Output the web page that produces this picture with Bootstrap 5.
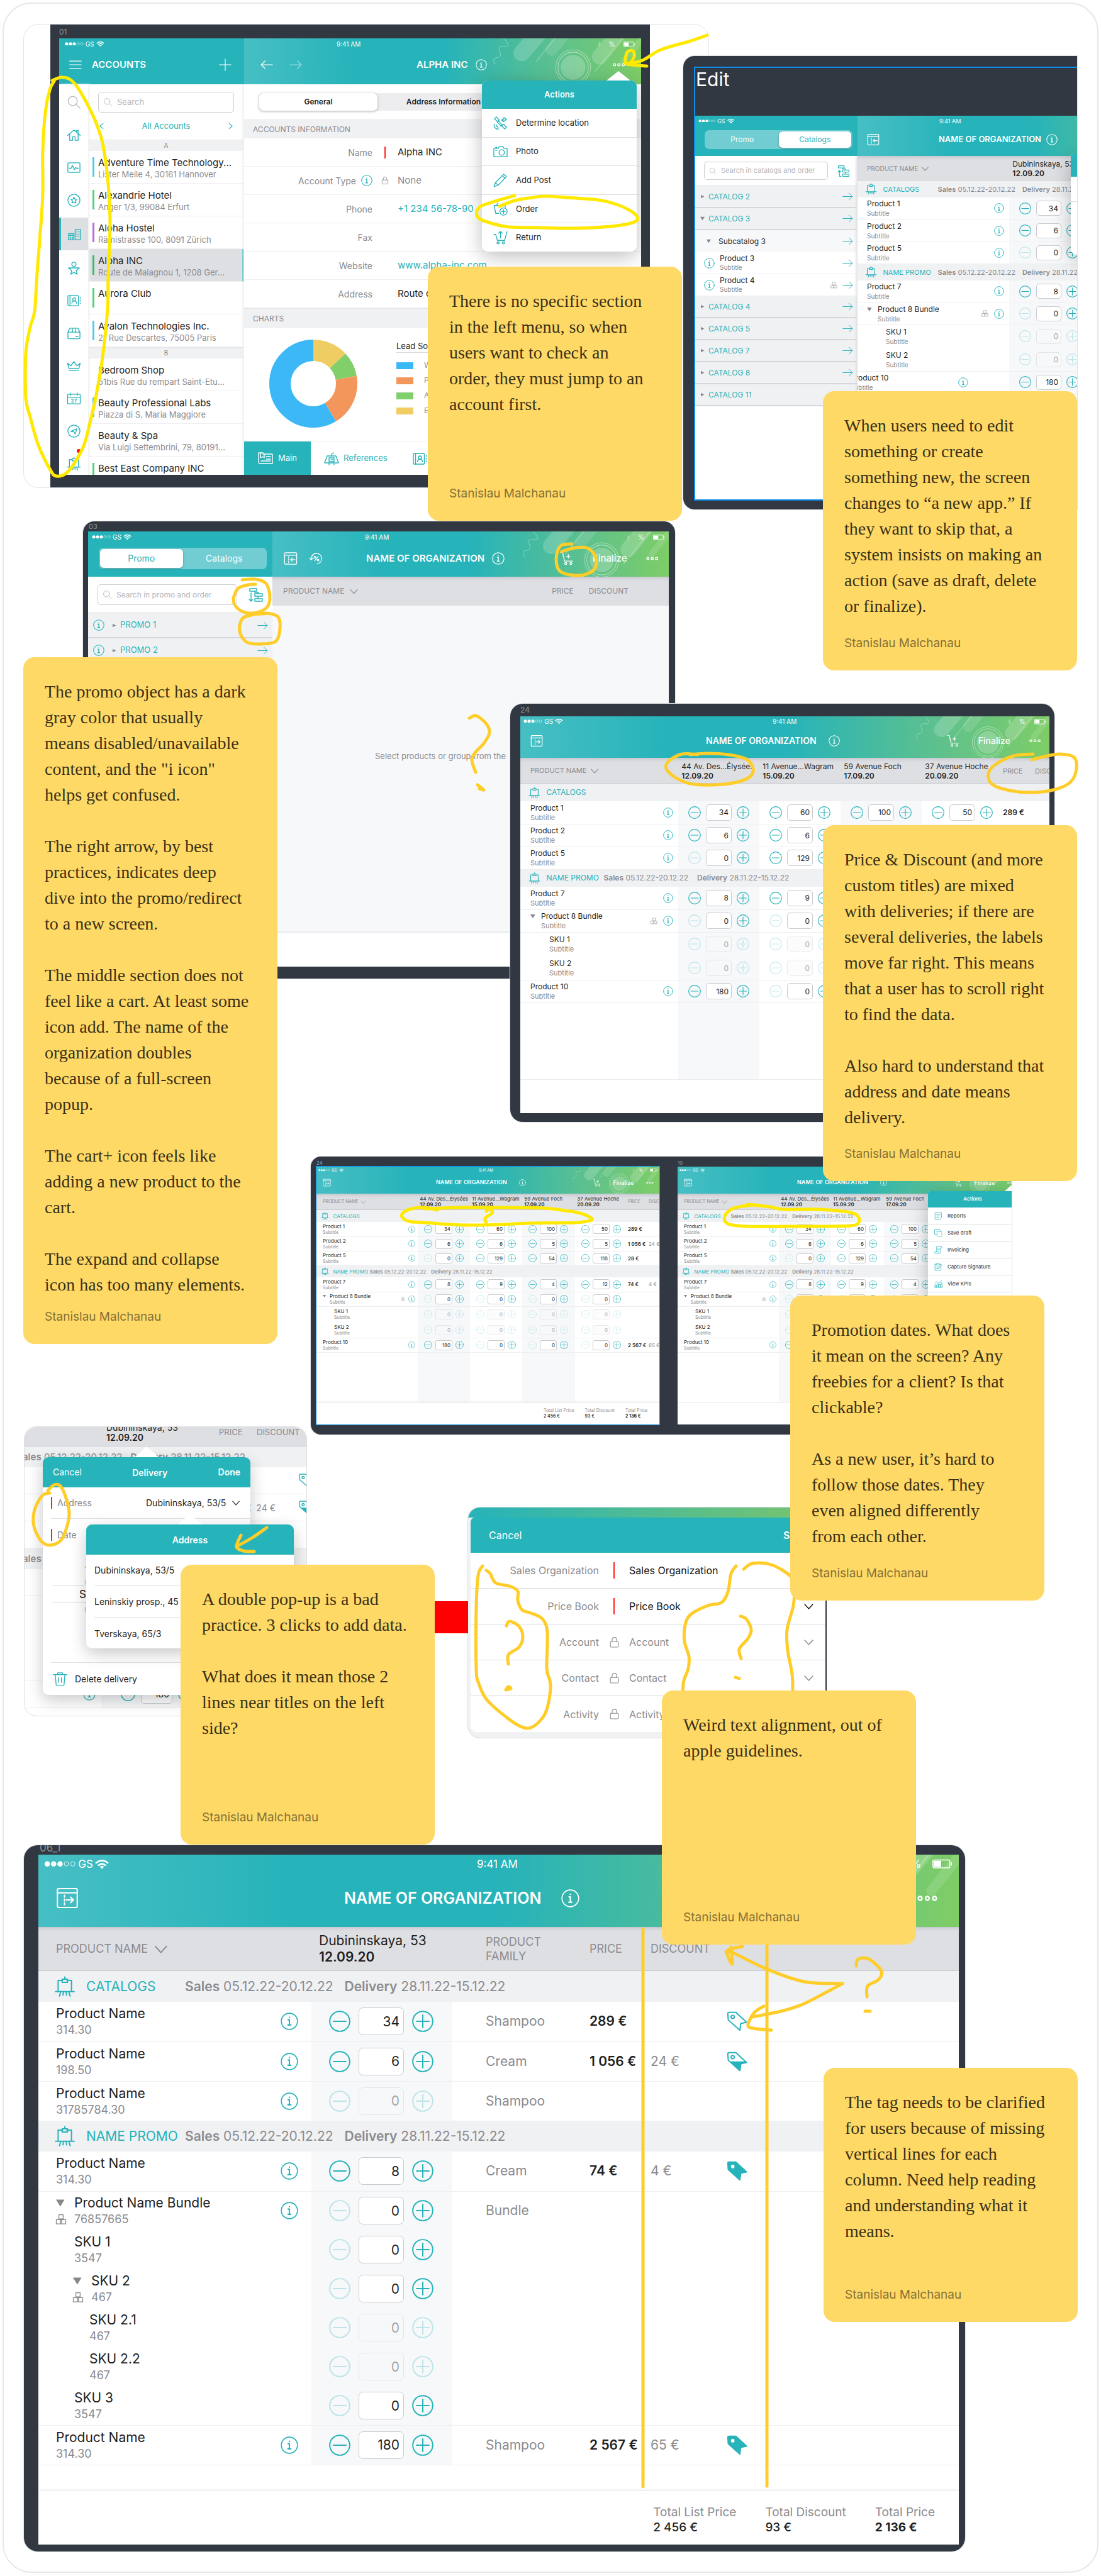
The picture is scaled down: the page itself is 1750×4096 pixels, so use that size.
<!DOCTYPE html>
<html lang="en">
<head>
<meta charset="utf-8">
<meta name="viewport" content="width=device-width, initial-scale=1">
<title>Order flow review board</title>
<link href="https://cdn.jsdelivr.net/npm/bootstrap@5.3.0/dist/css/bootstrap.min.css" rel="stylesheet">
<style>
:root{--teal:#26b3ba;--grey:#8b8b8f;--ink:#1f1f22;--note:#ffd966;--dark:#313841}
body{background:#fff;font-family:Inter,"Liberation Sans",sans-serif;color:var(--ink);margin:0}
.canvas{position:relative;min-height:4096px;overflow:hidden}
.canvas-edge{position:absolute;inset:4px 4px 5px 4px;border:2px solid #e8e8e8;border-radius:46px}
.ic{display:block;flex:none;width:var(--ic,20px);height:var(--ic,20px);fill:none;stroke:currentColor;stroke-width:1.4;stroke-linecap:round;stroke-linejoin:round}
.bare{background:none;border:0;padding:0;color:inherit;font:inherit;line-height:1;display:inline-flex;align-items:center;justify-content:center;text-decoration:none}
.txt-teal{color:var(--teal)}.txt-grey{color:var(--grey)}
a.txt-teal{text-decoration:none}

/* sticky notes */
.sticky{position:absolute;width:404px;min-height:404px;background:var(--note);border-radius:18px;padding:34px 24px 32px 34px;display:flex;flex-direction:column;font-family:"Liberation Serif",serif;font-size:28px;line-height:41px;color:#3a3117;white-space:nowrap}
.sticky p{margin:0 0 41px}
.sticky p:last-of-type{margin-bottom:20px}
.sticky footer{margin-top:auto;font-family:Inter,"Liberation Sans",sans-serif;font-size:19px;line-height:22px;color:#857136}
#n1{left:680px;top:424px}#n2{left:1308px;top:622px;min-height:444px}#n3{left:37px;top:1045px}#n4{left:1308px;top:1312px;min-height:566px}
#n5{left:1256px;top:2060px;min-height:485px}#n6{left:287px;top:2488px;min-height:445px}#n7{left:1052px;top:2688px}#n8{left:1309px;top:3288px}
#link-bar{position:absolute;left:690px;top:2546px;width:54px;height:51px;background:#f00}

/* device frames */
.device{position:absolute;background:var(--dark);overflow:hidden;display:flex;flex-direction:column;box-shadow:0 0 0 1px #e2e2e4}
.device-cap{flex:none;color:#8f9499;line-height:1}
.screen{background:#fff;overflow:hidden;position:relative}
#d1{left:37px;top:38px;width:1090px;height:738px;background:#fff;border:1px solid #e4e4e6;border-radius:24px;box-shadow:none}
#d1 .bezel{margin-left:42px;width:953px;background:var(--dark);padding:0 14px 20px;flex:1;display:flex;flex-direction:column;min-height:0}
#d1 .device-cap{height:22px;padding-top:6px;font-size:12px}
#d2{left:1086px;top:89px;width:626px;height:721px;border-radius:18px 0 0 18px;padding:17px 0 14px 17px}
#d2 .sel{border:2px solid #0d8ce9;border-right:0;flex:1;display:flex;flex-direction:column;min-height:0}
#d2 .device-cap{height:76px;font-size:30px;color:#fff;padding:3px 0 0 1px}
#d3{left:132px;top:829px;width:941px;height:727px;border-radius:18px;padding:0 10px 19px 8px}
#d3 .device-cap{height:16px;padding:3px 0 0 1px;font-size:11px}
#d4{left:811px;top:1119px;width:865px;height:665px;border-radius:20px;padding:0 8px 14px 16px}
#d4 .device-cap{height:20px;padding:4px 0 0;font-size:12px}
#d5{left:494px;top:1839px;width:1114px;height:442px;border-radius:16px 0 0 16px;padding:0 0 16px 9px;flex-direction:row;gap:29px}
#d5 .device-cap{height:16px;padding-top:6px;font-size:8px}
#d9{left:38px;top:2934px;width:1496px;height:1123px;border-radius:22px;padding:0 10px 11px 23px}
#d9 .device-cap{height:15px;font-size:17px;padding-left:2px;line-height:9px}

/* app chrome */
.app{--pad:16px;--fs:12px;--fs2:11px;--lh:16px;--lh2:14px;--hdr:66px;--st:401px;--sth:16px;--stf:10px;--tl:295px;--tf:14px;--head:41px;--hf:11px;--band:28px;--bf:12px;--bg:14px;--bl:91px;--bi:19px;--row:36px;--sku:38px;--info:16px;--ir:8px;--qp:16px;--btn:20px;--qg:8px;--inw:41px;--inh:26px;--ag:30px;--ar:14px;--hi:20px;--rad:5px}
.app-s{--pad:10px;--fs:8px;--fs2:7px;--lh:10px;--lh2:9px;--hdr:43px;--st:258px;--sth:11px;--stf:6px;--tl:190px;--tf:9px;--head:26px;--hf:7px;--band:19px;--bf:8px;--bg:8px;--bl:58px;--bi:13px;--row:23px;--sku:25px;--info:11px;--ir:4px;--qp:10px;--btn:13px;--qg:5px;--inw:27px;--inh:16px;--ag:20px;--ar:9px;--hi:13px;--rad:3px}
.app-l{--pad:28px;--fs:21px;--fs2:18px;--lh:28px;--lh2:24px;--hdr:115px;--st:697px;--sth:30px;--stf:17px;--tl:486px;--tf:25px;--head:70px;--hf:18px;--band:49px;--bf:21px;--bg:18px;--bl:157px;--bi:34px;--row:63px;--sku:62px;--info:28px;--ir:21px;--qp:28px;--btn:34px;--qg:13px;--inw:72px;--inh:44px;--ag:40px;--ar:34px;--hi:36px;--rad:7px}
.app-e{--pad:15px;--fs2:10px;--hdr:64px;--st:130px;--tl:129px;--tf:13px;--head:39px;--hf:10px;--band:27px;--bf:11px;--bg:11px;--bl:87px;--row:35px;--sku:37px;--btn:19px;--inw:40px;--inh:24px;--stf:9px}
.app-p{--hdr:72px;--st:147px;--sth:18px;--tl:149px;--tf:15px;--head:46px;--hf:12px;--hi:22px;--pad:18px;--ar:17px}
.app-a{--hdr:73px;--st:147px;--sth:18px;--tl:274px;--tf:15px;--hi:20px;--pad:26px;--ar:26px}
.bar{position:relative;flex:none;height:var(--hdr);color:#fff;display:flex;flex-direction:column;overflow:hidden;background:linear-gradient(90deg,#46bfc4 0,var(--teal) 28%,var(--teal) 50%,#5cc08f 78%,#7ecd66 100%)}
.bar.flat{background:var(--teal)}
.bar .deco{position:absolute;right:0;top:0;height:100%;width:auto;aspect-ratio:4/1}
.status{height:var(--sth);font-size:var(--stf);line-height:1;position:relative;flex:none;white-space:nowrap}
.st-left{width:var(--st);flex:none;padding-left:calc(var(--pad)/3);gap:3px}
.st-left .dots{height:.55em;width:3em}
.st-left .wifi{height:1em;width:1.3em}
.status .batt{width:1.9em;height:.9em}
.status .end{gap:.6em;padding-right:calc(var(--pad)/3)}
.tools{position:relative;flex:1;display:flex;align-items:center;padding-bottom:calc(var(--pad)/4)}
.tools .start{width:var(--tl);flex:none;padding-left:var(--pad);--ic:var(--hi);gap:18px}
.tools h2{font-size:var(--tf);font-weight:600;line-height:1.2;margin:0;white-space:nowrap}
.tools .i-circle{--ic:calc(var(--hi) - 2px);margin-left:var(--qg)}
.app-l .tools .i-circle{margin-left:32px;--ic:29px}
.app:not(.app-l):not(.app-e) .tools .i-circle{margin-left:1.2em}
.app-p .tools .i-circle,.app-a .tools .i-circle{margin-left:12px!important}
.tools .end{gap:var(--ag);padding-right:var(--ar);font-size:var(--tf);font-weight:500;--ic:var(--hi)}
.app-l .tools .end{font-size:23px}
.tools .more{width:1.3em;height:.4em;stroke:none;fill:none}
.app-l .tools .more{width:32px;height:9px}

/* order table */
.order{width:100%;table-layout:fixed;border-collapse:collapse;font-size:var(--fs);line-height:var(--lh)}
.order th,.order td{padding:0;font-weight:400;vertical-align:middle;white-space:nowrap}
.order thead tr{height:var(--head);background:#dedfe3;box-shadow:inset 0 5px 6px -4px #b8b8c2,inset 0 -1px 0 #c9cacf}
.order thead th{color:var(--grey);font-size:var(--hf)}
.order thead .dlv{color:var(--ink);font-size:var(--fs);line-height:calc(var(--lh) - 1px);padding-left:calc(var(--qp)/3)}
.app-l .order thead .dlv{padding-left:12px;line-height:26px}
.order thead .first{padding-left:var(--pad)}
.order thead .first .ic{display:inline-block;vertical-align:middle;width:1.3em;height:1.3em;margin-left:.5em}
.order .bandrow{height:var(--band);background:#f0f1f3;font-size:var(--bf);color:var(--grey)}
.bandline{display:flex;align-items:center;padding-left:calc(var(--pad) - 3px)}
.bandline .ic{--ic:var(--bi);margin-right:calc(var(--bi)/2);color:var(--teal)}
.bandline .lbl{width:var(--bl);color:var(--teal)}
.bandline .span-dates{display:flex;gap:var(--bg)}
.bandline b{font-weight:600}
.order .r{height:var(--row);border-bottom:1px solid #efeff1}
.order .sku{height:var(--sku);border-bottom-color:transparent}
.order .sku.last{border-bottom-color:#efeff1}
.order td.shade{background:#f7f8fa}
.nm{display:flex;align-items:center;padding-left:var(--pad)}
.nm .sub{font-size:var(--fs2);line-height:var(--lh2);color:var(--grey)}
.nm .lead-col{width:var(--lh);margin-right:1px;flex:none;color:#88888c}
.nm .tri{width:.65em;height:var(--lh);display:block}
.nm .lead-col .ic{--ic:18px;margin:3px 0 3px -1px;stroke-width:1.7}
.nm .bundle{--ic:calc(var(--fs) - 1px);color:#88888c;margin-right:calc(var(--ir) + 1px)}
.nm .i-circle{--ic:var(--info);margin-right:var(--ir);color:var(--teal)}
.nm .ind1{padding-left:calc(var(--lh) + 1px)}.nm .ind2{padding-left:calc(var(--lh)*2 - 2px)}
.app-l .nm .ind2{padding-left:53px}
.app-l .nm .ind1 + .lead-col{margin-left:-2px}
.shifted .nm{margin-left:-26px}.shifted .nm .i-circle{margin-right:65px}
.qty{display:flex;align-items:center;gap:var(--qg);padding-left:var(--qp);color:var(--teal);--ic:var(--btn)}
.qty input{width:var(--inw);height:var(--inh);border:1px solid #cbcbcf;border-radius:var(--rad);background:#fff;text-align:right;font-size:var(--fs);color:var(--ink);padding:0 calc(var(--rad) - 1px) 0 0;line-height:1;font-family:inherit}
.qty .off{opacity:.28}.qty input:disabled{opacity:.4;background:#f9faf9}
.order .fam{color:var(--grey);padding-left:53px}
.order td.disc{color:var(--grey)}
.order td.price{font-weight:600}
.order .tagcell{--ic:34px;color:var(--teal)}
.totals{display:flex;justify-content:flex-end;border-top:1px solid #ececee;box-shadow:0 -3px 4px -2px #eee;color:var(--grey);line-height:1.25}
.totals b{display:block;color:var(--ink);font-weight:500}
.totals div:last-child b{font-weight:700}

/* side lists */
.seg{display:flex;background:rgba(255,255,255,.35);border-radius:7px;padding:2px;font-size:14px}
.seg .bare{flex:1;border-radius:6px;color:#fff}
.seg .on{background:#fff;color:var(--teal);box-shadow:0 1px 3px rgba(0,0,0,.3)}
.find{border:1px solid #cfcfd4;border-radius:5px;display:flex;align-items:center;gap:7px;padding:0 7px;color:#b4b4b9;background:#fff;--ic:15px}
.find input{border:0;outline:0;width:100%;padding:0;background:none;color:var(--ink);font-size:inherit}
.find input::placeholder{color:#b4b4b9;opacity:1}
.tree-row{display:flex;align-items:center;height:35px;border-bottom:2px solid #d6d7da;background:#f0f1f3;color:var(--teal);font-size:12px;padding:0 7px 0 8px}
.tree-row .tri{width:7px;height:7px;margin-right:6px;color:#88888c}
.tree-row .go{--ic:17px;margin-left:auto}
.tree-row.leaf{background:#fff;border-bottom:1px solid #efeff1;color:var(--ink);padding-left:14px;line-height:14px}
.tree-row.subcat{background:#f7f8fa;border-bottom:0;color:var(--ink);padding-left:18px}
.tree-row.subcat .tri{margin-right:12px}

/* accounts screen */
.rail{width:46px;flex:none;height:629px;padding-top:3px;display:flex;flex-direction:column;color:var(--teal);--ic:23px;box-shadow:2px 0 3px #f1f1f3;position:relative}
.rail .bare{flex:1}
.rail .bare:first-child{color:#bcbcc0}
.rail .on{background:#dedfe3;border-left:3px solid var(--teal);margin:2px 0}
.rail i{position:absolute;width:6px;height:6px;border-radius:50%;background:#f11;right:12px;bottom:43px}
.alpha{height:18px;background:#f0f1f3;border-top:1px solid #e4e5e8;color:var(--grey);font-size:10px;line-height:17px;text-align:center}
.acc{display:flex;height:52px;border-bottom:1px solid #efeff1;padding:10px 0 0 7px;line-height:17px;font-size:15px;white-space:nowrap}
.acc:before{content:"";width:3px;height:31px;margin-right:6px;background:var(--c,transparent)}
.acc .sub{font-size:13px;line-height:20px;color:var(--grey)}
.acc.on{background:#dedfe3;border-right:3px solid var(--teal)}
.ttl-band{background:#f0f1f3;border-top:1px solid #e4e5e8;color:var(--grey);font-size:12px;display:flex;align-items:center;padding-left:14px}
.fld{display:flex;align-items:center;height:45px;border-bottom:1px solid #efeff1;font-size:15px}
.fld .k{width:204px;text-align:right;color:var(--grey);font-size:14px;display:flex;justify-content:flex-end;align-items:center}
.fld .m{width:40px;display:flex;justify-content:center;color:var(--grey);--ic:14px}
.req{width:2px;height:19px;background:#f22}
.menu-pop{position:absolute;background:#fff;display:flex;flex-direction:column;box-shadow:0 8px 30px rgba(0,0,0,.25);border-radius:9px}
.menu-pop h3{margin:0;background:var(--teal);color:#fff;border-radius:9px 9px 0 0;font-weight:600;text-align:center;display:flex;align-items:center;justify-content:center}
.menu-pop .bare{justify-content:flex-start;border-bottom:1px solid #dcdde0}
.menu-pop .bare .ic{color:var(--teal)}
.menu-pop .bare:last-child{border:0}
.menu-pop:before{content:"";position:absolute;bottom:100%;left:var(--cx);border:solid transparent;border-width:0 var(--cw) var(--chh);border-bottom-color:#fff}
#acts1{left:672px;top:67px;width:246px;height:272px;--cx:198px;--cw:19px;--chh:15px;font-size:13px}
#acts1 h3{height:45px;font-size:13px}
#acts1 .bare{flex:1;padding-left:18px;gap:13px;--ic:23px}
#acts6{left:398px;top:39px;width:146px;height:190px;--cx:122px;--cw:11px;--chh:10px;font-size:8px;border-radius:4px}
#acts6 h3{height:26px;font-size:8px;border-radius:4px 4px 0 0;padding-right:4px}
#acts6 .bare{height:27px;padding-left:10px;gap:8px;--ic:13px}
#acts2{left:597px;top:61px;width:200px;height:160px;font-size:12px;--cx:150px;--cw:10px;--chh:8px;border-radius:4px 0 0 9px}
#acts2 h3{height:36px;border-radius:4px 0 0 0}#acts2 .bare{height:40px}
.legend-row{display:flex;align-items:center;height:24px;color:var(--grey);font-size:12px}
.legend-row:before{content:"";width:27px;height:11px;background:var(--c);margin-right:17px}
.tabs1{height:54px;display:flex;border-top:1px solid #efeff1;color:var(--teal);font-size:13px;--ic:24px}
.tabs1 .bare{padding:0 18px 0 21px;gap:7px}
.tabs1 .on{background:var(--teal);color:#fff;width:106px;padding:0;gap:8px}

/* delivery popover capture */
#d7{position:absolute;left:38px;top:2268px;width:450px;height:461px;border:1px solid #dedee0;border-radius:20px;overflow:hidden;font-size:14px;background:#fff}
#d7 .bg-head{height:31px;background:#dedfe3;border-bottom:1px solid #c6c7cc;display:flex;align-items:flex-end;color:var(--grey);line-height:16px;padding-bottom:5px;font-size:14px}
#d7 .bg-addr{width:309px;padding-left:130px;color:var(--ink)}
#d7 .bg-band{height:33px;background:#f0f1f3;color:var(--grey);line-height:33px;white-space:nowrap;font-size:15px;text-indent:-3px}
#d7 .bg-row{height:43px;border-bottom:1px solid #efeff1;display:flex;align-items:center;justify-content:flex-end;color:var(--grey);--ic:25px}
#d7 .pop{position:absolute;background:#fff;border-radius:9px;width:330px;box-shadow:0 8px 26px rgba(0,0,0,.22)}
#d7 .pop:before{content:"";position:absolute;left:146px;bottom:100%;border:solid transparent;border-width:0 19px 17px;border-bottom-color:#fff}
#d7 .pop header{height:48px;background:var(--teal);color:#fff;border-radius:9px 9px 0 0;display:flex;align-items:center;justify-content:space-between;padding:0 16px}
#d7 .p1{left:29px;top:48px;height:378px;display:flex;flex-direction:column}
#d7 .p2{left:98px;top:155px;height:197px}
#d7 .line{display:flex;align-items:center;height:50px;margin-left:13px;border-bottom:1px solid #e2e2e4}
#d7 .faint{color:#c4c4c8;margin-left:66px}
.drop{appearance:none;border:0;background:none;color:inherit;font:inherit;padding:0;margin:0;outline:0}
/* sales organisation form capture */
#d8{position:absolute;left:743px;top:2396px;width:571px;height:368px;border:1px solid #dedee0;border-right:2px solid var(--dark);border-radius:20px 0 0 20px;overflow:hidden;font-size:16px;background:#f0f1f3}
#d8 .strip{height:16px;background:linear-gradient(90deg,#26b3ba,#7ac56c)}
#d8 form{margin-left:4px;background:#fff;border-radius:7px 0 0 9px;overflow:hidden}
#d8 header{height:56px;background:var(--teal);color:#fff;display:flex;align-items:center;padding:0 29px;justify-content:space-between}
#d8 .frow{display:flex;align-items:center;height:57px;border-bottom:1px solid #d9dadd;color:var(--grey);padding-right:18px}
#d8 .frow:last-child{border:0}
#d8 .frow label{width:204px;text-align:right;color:var(--grey)}
#d8 .frow .m{width:48px;display:flex;justify-content:center;--ic:19px}
#d8 .frow.must .drop,#d8 .frow.must > .ic{color:#111}
#d8 .frow .drop{flex:1}
#d8 .frow > .ic{--ic:17px}
#d8 .req{height:26px}
.ink{position:absolute;left:0;top:0;pointer-events:none;fill:none;stroke-linecap:round;stroke-linejoin:round}
</style>
</head>
<body>
<svg width="0" height="0" class="position-absolute" aria-hidden="true"><defs>
<symbol id="search" viewBox="0 0 24 24"><circle cx="10" cy="10" r="7.5"/><path d="M15.5 15.5 22 22"/></symbol>
<symbol id="home" viewBox="0 0 24 24"><path d="M1.5 13 12 4l10.500 9M5 10.500V21h5v-6h4v6h5V10.500M16 7V4.500h3V10"/></symbol>
<symbol id="pulse" viewBox="0 0 24 24"><rect x="2" y="4" width="20" height="16" rx="1.500"/><path d="M4.500 13h3l2-4.500 3.500 7 2-4 1 1.500h3.500"/></symbol>
<symbol id="starc" viewBox="0 0 24 24"><circle cx="12" cy="12" r="10"/><path d="m12 6.800 1.500 3.300 3.600.4-2.700 2.400.8 3.600-3.200-1.800-3.200 1.800.8-3.600-2.700-2.400 3.600-.4z"/></symbol>
<symbol id="city" viewBox="0 0 24 24"><path d="M2 11h9v10H2zM2 14h9M13 4h9v17h-9zM4.500 17h1M8 17h1M4.500 19.300h1M8 19.300h1M15.500 7h1M18.800 7h1M15.500 10h1M18.800 10h1M15.500 13h1M18.800 13h1M15.500 16h1M18.800 16h1"/></symbol>
<symbol id="pstar" viewBox="0 0 24 24"><circle cx="12" cy="5.500" r="3.500"/><path d="M3 11.500h18l-5.500 4.500 2 6-5.500-3-5.500 3 2-6z"/></symbol>
<symbol id="contact" viewBox="0 0 24 24"><rect x="2" y="4" width="17.500" height="17" rx="1.500"/><path d="M5.500 4v17M22.500 7v1.500M22.500 11.500V13M22.500 16v1.500"/><circle cx="12.500" cy="10.500" r="2.500"/><path d="M8.500 17c.3-3 2-3.800 4-3.800s3.700.8 4 3.800"/></symbol>
<symbol id="box" viewBox="0 0 24 24"><path d="M2 10.500h20V20a1.500 1.500 0 0 1-1.500 1.500h-17A1.500 1.500 0 0 1 2 20zM2 10.500 5.500 4h13l3.500 6.500M9.500 4v6M14.500 4v6M15 18h4"/></symbol>
<symbol id="crown" viewBox="0 0 24 24"><path d="m4 17-2.500-9L7 12l5-7 5 7 5.500-4L20 17zM4 20h16"/></symbol>
<symbol id="cal" viewBox="0 0 24 24"><rect x="1.500" y="5" width="21" height="16" rx="1.500"/><path d="M1.500 10h21M6.500 3v4M17.500 3v4"/><text x="12" y="18.500" font-size="8" font-weight="700" text-anchor="middle" fill="currentColor" stroke="none">27</text></symbol>
<symbol id="geo" viewBox="0 0 24 24"><circle cx="12" cy="12" r="10"/><path d="M7 12.500 17 8l-3 9-2-4z"/></symbol>
<symbol id="easel" viewBox="0 0 24 24"><path d="M9.500 5h-5v12.500h15V5h-5M1.500 17.500h21M9 3.500h6v3.500H9zM12 1v2.500M7.500 17.500 6 22.500M16.500 17.500l1.500 5M10.500 17.500l-.5 4M13.500 17.500l.5 4"/></symbol>
<symbol id="menu" viewBox="0 0 24 24"><path d="M1 5h22M1 12h22M1 19h22"/></symbol>
<symbol id="plus" viewBox="0 0 24 24"><path d="M12 1v22M1 12h22"/></symbol>
<symbol id="left" viewBox="0 0 24 24"><path d="M23 12H2M9 4.500 1.500 12 9 19.500"/></symbol>
<symbol id="right" viewBox="0 0 24 24"><path d="M1 12h21M15 4.500l7.500 7.500L15 19.500"/></symbol>
<symbol id="cleft" viewBox="0 0 24 24"><path d="M17 3 6 12l11 9" stroke-width="2.400"/></symbol>
<symbol id="cright" viewBox="0 0 24 24"><path d="m7 3 11 9-11 9" stroke-width="2.400"/></symbol>
<symbol id="down" viewBox="0 0 24 24"><path d="m3 7 9 10 9-10" stroke-width="2"/></symbol>
<symbol id="info" viewBox="0 0 24 24"><circle cx="12" cy="12" r="11"/><path d="M10.300 10H12v7M10 17h4M12 6.500v.3" stroke-width="1.800"/></symbol>
<symbol id="cminus" viewBox="0 0 24 24"><circle cx="12" cy="12" r="11.200"/><path d="M5 12h14"/></symbol>
<symbol id="cplus" viewBox="0 0 24 24"><circle cx="12" cy="12" r="11.200"/><path d="M5 12h14M12 5v14"/></symbol>
<symbol id="lock" viewBox="0 0 24 24"><rect x="4" y="10.500" width="16" height="11" rx="1.500"/><path d="M7.500 10V6.500a4.500 4.500 0 0 1 9 0V10"/></symbol>
<symbol id="panelin" viewBox="0 0 24 24"><rect x="1.500" y="2" width="21" height="20" rx="1.500"/><path d="M1.500 6.500h21M8.500 9v2M8.500 13v2M8.500 17v2M19.500 14h-7M15 11l-3 3 3 3"/></symbol>
<symbol id="panelout" viewBox="0 0 24 24"><rect x="1.500" y="2" width="21" height="20" rx="1.500"/><path d="M1.500 6.500h21M9 9v2M9 13v2M9 17v2M11 14h7M15.500 11l3 3-3 3"/></symbol>
<symbol id="pct" viewBox="0 0 24 24"><path d="M4 14C4 6 9 3 13 3c5 0 9 4 9 9s-3 9-8 9.500M1 11l3 3.500L7.500 11M16 9l-6 7"/><circle cx="10.500" cy="10" r="1.600"/><circle cx="16" cy="15" r="1.600"/></symbol>
<symbol id="cart" viewBox="0 0 24 24"><path d="M1 1.500h3.500L8 16.500h14M14.500 5v6.500M11.500 8.200h6"/><circle cx="10" cy="20.800" r="1.800"/><circle cx="19" cy="20.800" r="1.800"/></symbol>
<symbol id="tree" viewBox="0 0 24 24"><path d="M2 2h11v4H2zM10 10h12v4H10zM10 18h12v4H10zM15 14v4M10 6v2h6v2M4 22V11M1 14l3-3.500L7 14M4 22h3"/></symbol>
<symbol id="treed" viewBox="0 0 24 24"><path d="M2 2h11v4H2zM10 10h12v4H10zM10 18h12v4H10zM15 14v4M10 6v2h6v2M4 9v13M1 19l3 3 3-3"/></symbol>
<symbol id="tri-r" viewBox="0 0 10 10"><path d="M1.500 1v8L9 5z" fill="currentColor" stroke="none"/></symbol>
<symbol id="tri-d" viewBox="0 0 10 10"><path d="M0 1h10L5 9z" fill="currentColor" stroke="none"/></symbol>
<symbol id="boxes" viewBox="0 0 24 24"><path d="M7.500 2h9v9h-9zM2 12.500h9v9H2zM13 12.500h9v9h-9z"/></symbol>
<symbol id="tag0" viewBox="0 0 24 24"><path d="M2 3.500Q2 2 3.500 2H11l12 11-6.500 1.500L15.500 22 2.500 10.500z"/><circle cx="7.500" cy="7" r="1.800"/></symbol>
<symbol id="tag1" viewBox="0 0 24 24"><path d="M5 12.500h17.500l-6 2-1 7.500z" fill="currentColor"/><path d="M2 3.500Q2 2 3.500 2H11l12 11-6.500 1.500L15.500 22 2.500 10.500z"/><circle cx="7.500" cy="7" r="1.800"/></symbol>
<symbol id="tag2" viewBox="0 0 24 24"><path d="M2 3.500Q2 2 3.500 2H11l12 11-6.500 1.500L15.500 22 2.500 10.500z" fill="currentColor"/><circle cx="7.500" cy="7" r="2" fill="#fff" stroke="none"/></symbol>
<symbol id="trash" viewBox="0 0 24 24"><path d="M1 5h22M8 5V2h8v3M4 5l1.500 17.500h13L20 5M9.700 10v8M14.300 10v8"/></symbol>
<symbol id="sat" viewBox="0 0 24 24"><path d="m9 9 6 6-2 2-6-6zM15 9l3-3M2 5l3-3 5 5-3 3zM14 17l3-3 5 5-3 3zM18 3l4 3-5 4-3-3zM2 14a6 6 0 0 0 7 8M5 15a4 4 0 0 0 3 4"/></symbol>
<symbol id="cam" viewBox="0 0 24 24"><path d="M1 7.500h7L10 4h6l2 3.500h5V21H1zM4 5.500h2"/><circle cx="14" cy="14" r="4.500"/><path d="M4 10.500h2"/></symbol>
<symbol id="pencil" viewBox="0 0 24 24"><path d="m1.500 22.500 2-6.500L17.500 2l4.500 4L8 20.500zM3.500 16 8 20.500M15 4.500l4.500 4.500"/></symbol>
<symbol id="ordr" viewBox="0 0 24 24"><path d="M9 19H4L1.500 6H9M5 6l3-4M14 6h6M20 6v3M16 2l2 4"/><circle cx="17" cy="16" r="6"/><path d="M17 13v6M14 16h6"/></symbol>
<symbol id="ret" viewBox="0 0 24 24"><path d="M1 7h3l3 10h12l3.500-14h1M12 13V2M9 5l3-3 3 3"/><circle cx="8" cy="21" r="1.700"/><circle cx="17" cy="21" r="1.700"/></symbol>
<symbol id="doc" viewBox="0 0 24 24"><path d="M3 2h18v15l-4 5H3zM7 8h10M7 12h10M7 16h6"/></symbol>
<symbol id="draft" viewBox="0 0 24 24"><path d="M17 7V2H1v14h6"/><path d="M8 8h14v14H8z" stroke-dasharray="2 2.500"/></symbol>
<symbol id="inv" viewBox="0 0 24 24"><path d="M7 17V2h15v4h-4v13a3 3 0 0 1-3 3H4a3 3 0 0 1-3-5h12v2M10 7h5M10 11h5"/></symbol>
<symbol id="sign" viewBox="0 0 24 24"><path d="M16 4h3v3M19 14v8H2V4h4M6 2h9v4H6zM10 17l1-4L21 5l2 2-9 9zM5 12h4M5 16h3"/></symbol>
<symbol id="kpi" viewBox="0 0 24 24"><path d="M2 22v-7h4v7M8 22V12h4v10M14 22v-8h4v8M20 22V9h3v13M1 22h22M2 10l6-5 6 4 8-7"/></symbol>
<symbol id="mainic" viewBox="0 0 24 24"><path d="M8 5h14a1 1 0 0 1 1 1v14H3a2 2 0 0 1-2-2V3h7zM4 3v8l3-2 3 2V5M13 9h7M13 13h7M5 16h15"/></symbol>
<symbol id="refic" viewBox="0 0 24 24"><path d="M5 8h14l4 11H1zM8 11h8v6H8zM12 8V5l3-2M8 19v3M16 19v3M11 14h3"/></symbol>
<symbol id="dots5" viewBox="0 0 50 9"><g fill="#fff" stroke="none"><circle cx="5" cy="4.500" r="4.200"/><circle cx="15" cy="4.500" r="4.200"/><circle cx="25" cy="4.500" r="4.200"/></g><circle cx="35" cy="4.500" r="3.500" stroke-width=".8"/><circle cx="45" cy="4.500" r="3.500" stroke-width=".8"/></symbol>
<symbol id="wifi" viewBox="0 0 24 18"><path d="M2 6.500a14.500 14.500 0 0 1 20 0M6 10.500a9 9 0 0 1 12 0" stroke-width="2.600"/><path d="M8.500 13a5 5 0 0 1 7 0L12 17z" fill="#fff" stroke="none"/></symbol>
<symbol id="batt" viewBox="0 0 30 13"><rect x=".7" y=".7" width="25" height="11.600" rx="2"/><rect x="2" y="2" width="11" height="9" fill="#fff" stroke="none"/><path d="M28 4.500v4"/></symbol>
<symbol id="more" viewBox="0 0 32 9"><g stroke="#fff" stroke-width="2.300"><circle cx="4.500" cy="4.500" r="3"/><circle cx="16" cy="4.500" r="3"/><circle cx="27.500" cy="4.500" r="3"/></g></symbol>
<symbol id="bt" viewBox="0 0 12 20"><path d="m2 6 8 8-4 4V2l4 4-8 8"/></symbol>
<symbol id="deco" viewBox="0 0 400 100"><g stroke="#fff" stroke-linecap="round" fill="none"><path d="M140 32 185-20" stroke-width="36" opacity=".18"/><path d="M205 25 245-25" stroke-width="26" opacity=".12"/><path d="m172 50 50-62M300 72l70-86" stroke-width="2" opacity=".25"/><path d="m310 40 45-55" stroke-width="34" opacity=".18"/><path d="m362 50 50-62" stroke-width="14" opacity=".12"/><path d="M82 56q-8-12 4-14t6-14 10-10 2-14 8-12" stroke-width="1.500" opacity=".3"/><circle cx="252" cy="63" r="38" stroke-width="1.500" opacity=".4"/><circle cx="252" cy="63" r="33" stroke-width="1.500" opacity=".5"/></g><circle cx="252" cy="63" r="27" fill="#fff" opacity=".22"/></symbol>
</defs></svg>

<main class="canvas">
<div class="canvas-edge"></div>

<section class="device" id="d1" aria-label="Accounts screen"><div class="bezel">
 <div class="device-cap">01</div>
 <div class="screen app app-a d-flex flex-fill">
  <div class="d-flex flex-column flex-shrink-0" style="width:294px">
   <div class="bar flat"><div class="status d-flex align-items-center" data-signal></div>
    <div class="tools px-3 gap-3"><button class="bare" aria-label="Menu"><svg class="ic"><use href="#menu"/></svg></button><h2>ACCOUNTS</h2><button class="bare ms-auto me-1" aria-label="Add account"><svg class="ic"><use href="#plus"/></svg></button></div></div>
   <div class="d-flex"><nav class="rail" id="rail"></nav>
    <div class="flex-fill"><div class="px-3 pt-2"><label class="find mt-1" style="height:33px;font-size:13px"><svg class="ic"><use href="#search"/></svg><input type="search" placeholder="Search" aria-label="Search accounts"></label></div>
     <div class="d-flex align-items-center justify-content-between txt-teal px-3" style="height:43px;font-size:13px"><button class="bare" aria-label="Previous list"><svg class="ic" style="--ic:11px"><use href="#cleft"/></svg></button><span>All Accounts</span><button class="bare" aria-label="Next list"><svg class="ic" style="--ic:11px"><use href="#cright"/></svg></button></div>
     <div id="accs"></div></div></div>
  </div>
  <div class="d-flex flex-column flex-fill" style="box-shadow:-2px 0 4px #eee">
   <div class="bar"><svg class="deco"><use href="#deco"/></svg><div class="status d-flex align-items-center" data-status></div>
    <div class="tools"><div class="start d-flex" style="gap:26px"><button class="bare" aria-label="Back"><svg class="ic"><use href="#left"/></svg></button><button class="bare opacity-50" aria-label="Forward"><svg class="ic"><use href="#right"/></svg></button></div><h2>ALPHA INC</h2><button class="bare" aria-label="Info"><svg class="ic i-circle"><use href="#info"/></svg></button><div class="end ms-auto d-flex"><button class="bare" aria-label="More"><svg class="ic more"><use href="#more"/></svg></button></div></div></div>
   <div class="d-flex align-items-center" style="height:56px;padding:0 24px"><div class="d-flex w-100 fw-semibold" style="height:28px;background:#ededef;border-radius:7px;font-size:12px"><button class="bare bg-white" style="width:188px;border-radius:7px;box-shadow:0 1px 4px #aaa">General</button><button class="bare" style="width:210px">Address Information</button></div></div>
   <div class="ttl-band" style="height:30px">ACCOUNTS INFORMATION</div>
   <div class="fld"><span class="k">Name</span><span class="m"><i class="req"></i></span>Alpha INC</div>
   <div class="fld"><span class="k">Account Type<svg class="ic txt-teal ms-2 me-0" style="--ic:18px"><use href="#info"/></svg></span><span class="m"><svg class="ic"><use href="#lock"/></svg></span><span class="txt-grey">None</span></div>
   <div class="fld"><span class="k">Phone</span><span class="m"></span><a class="txt-teal" href="#">+1 234 56-78-90</a></div>
   <div class="fld"><span class="k">Fax</span><span class="m"></span></div>
   <div class="fld"><span class="k">Website</span><span class="m"></span><a class="txt-teal" href="#">www.alpha-inc.com</a></div>
   <div class="fld"><span class="k">Address</span><span class="m"></span>Route de</div>
   <div class="ttl-band" style="height:32px">CHARTS</div>
   <div class="d-flex flex-fill" style="padding:18px 0 0 40px"><svg width="140" height="140" viewBox="0 0 140 140" fill="none" stroke-width="34"><g id="donut" transform="rotate(-90 70 70)"></g></svg>
    <div style="padding:0 0 0 62px"><div class="mb-2" style="font-size:13px;line-height:20px;border-bottom:1px solid #ddd;width:120px">Lead So</div><div id="legend"></div></div></div>
   <div class="tabs1"><button class="bare on"><svg class="ic"><use href="#mainic"/></svg>Main</button><button class="bare"><svg class="ic"><use href="#refic"/></svg>References</button><button class="bare" aria-label="Contacts"><svg class="ic"><use href="#contact"/></svg></button></div>
  </div>
  <div class="menu-pop" id="acts1"><h3>Actions</h3><button class="bare"><svg class="ic"><use href="#sat"/></svg>Determine location</button><button class="bare"><svg class="ic"><use href="#cam"/></svg>Photo</button><button class="bare"><svg class="ic"><use href="#pencil"/></svg>Add Post</button><button class="bare"><svg class="ic"><use href="#ordr"/></svg>Order</button><button class="bare"><svg class="ic"><use href="#ret"/></svg>Return</button></div>
 </div></div></section>

<section class="device" id="d2" aria-label="Edit order screen"><div class="sel">
 <div class="device-cap">Edit</div>
 <div class="screen app app-e d-flex flex-fill">
  <div class="flex-shrink-0" style="width:258px">
   <div class="bar flat"><div class="status d-flex align-items-center" data-signal></div><div class="tools px-0"><div class="seg flex-fill" style="height:30px;margin:0 8px 0 15px;font-size:12px"><button class="bare">Promo</button><button class="bare on">Catalogs</button></div></div></div>
   <div class="d-flex align-items-center" style="height:48px;padding:0 12px 0 14px;border-bottom:1px solid #d6d7da"><label class="find" style="width:197px;height:29px;font-size:11px;--ic:12px"><svg class="ic"><use href="#search"/></svg><input type="search" placeholder="Search in catalogs and order" aria-label="Search catalogs"></label><button class="bare ms-auto txt-teal" aria-label="Collapse tree"><svg class="ic"><use href="#tree"/></svg></button></div>
   <div id="cats"></div>
  </div>
  <div class="flex-shrink-0 overflow-hidden" style="width:556px;box-shadow:-2px 0 4px #ddd" data-order="edit"></div>
  <div class="menu-pop" id="acts2"><h3></h3><button class="bare" aria-label="Action"></button><button class="bare" aria-label="Action"></button></div>
 </div></div></section>

<section class="device" id="d3" aria-label="Empty order screen">
 <div class="device-cap">03</div>
 <div class="screen app app-p d-flex flex-fill">
  <div class="flex-shrink-0" style="width:293px">
   <div class="bar flat"><div class="status d-flex align-items-center" data-signal></div><div class="tools"><div class="seg flex-fill" style="height:34px;margin:0 9px 0 17px"><button class="bare on">Promo</button><button class="bare">Catalogs</button></div></div></div>
   <div class="d-flex align-items-center" style="height:58px;padding:0 14px 0 15px;border-bottom:1px solid #d6d7da"><label class="find" style="width:222px;height:33px;font-size:12px"><svg class="ic"><use href="#search"/></svg><input type="search" placeholder="Search in promo and order" aria-label="Search promo"></label><button class="bare ms-auto txt-teal" aria-label="Expand tree"><svg class="ic" style="--ic:24px"><use href="#treed"/></svg></button></div>
   <div id="promos"></div>
  </div>
  <div class="flex-fill d-flex flex-column">
   <div class="bar"><svg class="deco"><use href="#deco"/></svg><div class="status d-flex align-items-center" data-status></div>
   <div class="tools"><div class="start d-flex"><button class="bare" aria-label="Hide panel"><svg class="ic"><use href="#panelin"/></svg></button><button class="bare" aria-label="Discounts"><svg class="ic"><use href="#pct"/></svg></button></div><h2>NAME OF ORGANIZATION</h2><button class="bare" aria-label="Info"><svg class="ic i-circle"><use href="#info"/></svg></button><div class="end ms-auto d-flex align-items-center"><button class="bare" aria-label="Add to cart"><svg class="ic"><use href="#cart"/></svg></button><button class="bare">Finalize</button><button class="bare" aria-label="More"><svg class="ic more"><use href="#more"/></svg></button></div></div></div>
   <div class="d-flex align-items-center txt-grey" style="height:46px;background:#dedfe3;font-size:12px;padding:0 64px 0 17px;box-shadow:inset 0 5px 6px -4px #b8b8c2"><span>PRODUCT NAME</span><svg class="ic ms-2" style="--ic:15px"><use href="#down"/></svg><span class="ms-auto me-4">PRICE</span><span>DISCOUNT</span></div>
   <div class="flex-fill txt-grey" style="background:#f7f8fa;border-bottom:2px solid #ececee;padding:230px 0 0 163px;font-size:13px;white-space:nowrap">Select products or group from the</div>
   <div style="height:54px"></div>
  </div>
 </div></section>

<section class="device" id="d4" aria-label="Order with several deliveries"><div class="device-cap">24</div><div class="screen app flex-fill" data-order="four"></div></section>

<section class="device" id="d5" aria-label="Order screens, promotion dates">
 <div class="d-flex flex-column flex-shrink-0"><div class="device-cap" style="color:#6fa8dc">24</div><div class="screen app app-s flex-fill" style="width:545px;outline:1px solid #0d8ce9" data-order="small"></div></div>
 <div class="d-flex flex-column flex-shrink-0"><div class="device-cap">10</div><div class="screen app app-s flex-fill" style="width:545px"><div data-order="dates"></div>
  <div class="menu-pop" id="acts6"><h3>Actions</h3><button class="bare"><svg class="ic"><use href="#doc"/></svg>Reports</button><button class="bare"><svg class="ic"><use href="#draft"/></svg>Save draft</button><button class="bare"><svg class="ic"><use href="#inv"/></svg>Invoicing</button><button class="bare"><svg class="ic"><use href="#sign"/></svg>Capture Signature</button><button class="bare" style="border-bottom:1px solid #dcdde0"><svg class="ic"><use href="#kpi"/></svg>View KPIs</button></div></div></div>
</section>

<section id="d7" aria-label="Delivery popovers">
 <div class="bg-head"><div class="bg-addr">Dubininskaya, 53<br><b class="fw-semibold">12.09.20</b></div><span style="width:60px;margin-bottom:9px;font-size:13px">PRICE</span><span style="margin-bottom:9px;font-size:13px">DISCOUNT</span></div>
 <div class="bg-band"><b class="fw-semibold">ales</b> 05.12.22-20.12.22 &nbsp; <b class="fw-semibold">Delivery</b> 28.11.22-15.12.22</div>
 <div class="bg-row"><svg class="ic txt-teal" style="margin-right:-12px"><use href="#tag0"/></svg></div>
 <div class="bg-row"><b class="text-dark me-2">€</b><span style="margin-right:36px">24 €</span><svg class="ic txt-teal" style="margin-right:-12px"><use href="#tag1"/></svg></div>
 <div class="bg-row"></div>
 <div class="bg-band"><b class="fw-semibold">ales</b> 0</div>
 <div class="bg-row"></div>
 <div style="height:134px;border-bottom:1px solid #efeff1"></div>
 <div class="d-flex align-items-center txt-teal" style="height:44px;padding-left:93px;border-bottom:1px solid #efeff1;gap:40px;background:linear-gradient(90deg,#fff 122px,#f7f8fa 122px)"><svg class="ic" style="--ic:20px"><use href="#info"/></svg><div class="qty p-0" style="--btn:23px;--qg:9px;--inw:50px;--inh:30px;--rad:5px;--fs:14px"><svg class="ic"><use href="#cminus"/></svg><input value="180" aria-label="Quantity"><svg class="ic"><use href="#cplus"/></svg></div></div>
 <div class="pop p1"><header><button class="bare">Cancel</button><span class="fw-semibold">Delivery</span><button class="bare fw-semibold">Done</button></header>
  <div class="line"><i class="req me-2"></i><label class="txt-grey" for="addr">Address</label><select class="drop ms-auto me-2" id="addr"><option>Dubininskaya, 53/5</option></select><svg class="ic me-3" style="--ic:14px"><use href="#down"/></svg></div>
  <div class="line border-0"><i class="req me-2"></i><span class="txt-grey">Date</span></div>
  <div class="faint" style="line-height:24px;height:56px;padding-top:12px">J<br>A</div>
  <div style="margin-left:15px;padding-left:43px;border:solid #e2e2e4;border-width:1px 0;font-size:17px;line-height:26px;color:#111">S</div>
  <div class="faint" style="line-height:22px">O</div>
  <div class="mt-auto" style="margin-left:12px;border-top:1px solid #e2e2e4;height:52px;padding-left:4px"><button class="bare h-100 gap-2"><svg class="ic txt-teal me-1" style="--ic:23px"><use href="#trash"/></svg>Delete delivery</button></div></div>
 <div class="pop p2"><header class="justify-content-center fw-semibold">Address</header><div class="line">Dubininskaya, 53/5</div><div class="line">Leninskiy prosp., 45</div><div class="line border-0">Tverskaya, 65/3</div></div>
</section>

<section id="d8" aria-label="Sales organization form"><div class="strip"></div>
 <form><header><button type="button" class="bare">Cancel</button><button type="button" class="bare fw-semibold">Save</button></header>
  <div class="frow must"><label for="so">Sales Organization</label><span class="m"><i class="req"></i></span><select class="drop" id="so"><option>Sales Organization</option></select><svg class="ic"><use href="#down"/></svg></div>
  <div class="frow must"><label for="pb">Price Book</label><span class="m"><i class="req"></i></span><select class="drop" id="pb"><option>Price Book</option></select><svg class="ic"><use href="#down"/></svg></div>
  <div class="frow"><label for="ac">Account</label><span class="m"><svg class="ic"><use href="#lock"/></svg></span><select class="drop" id="ac"><option>Account</option></select><svg class="ic"><use href="#down"/></svg></div>
  <div class="frow"><label for="co">Contact</label><span class="m"><svg class="ic"><use href="#lock"/></svg></span><select class="drop" id="co"><option>Contact</option></select><svg class="ic"><use href="#down"/></svg></div>
  <div class="frow"><label for="at">Activity</label><span class="m"><svg class="ic"><use href="#lock"/></svg></span><select class="drop" id="at"><option>Activity</option></select><svg class="ic"><use href="#down"/></svg></div>
 </form></section>
<div id="link-bar"></div>

<section class="device" id="d9" aria-label="Order with price and discount columns"><div class="device-cap">06_1</div><div class="screen app app-l flex-fill" data-order="large"></div></section>

<svg class="ink w-100 h-100" id="ink" aria-hidden="true"></svg>

<article class="sticky" id="n1"><p>There is no specific section<br>in the left menu, so when<br>users want to check an<br>order, they must jump to an<br>account first.</p><footer>Stanislau Malchanau</footer></article>
<article class="sticky" id="n2"><p>When users need to edit<br>something or create<br>something new, the screen<br>changes to “a new app.” If<br>they want to skip that, a<br>system insists on making an<br>action (save as draft, delete<br>or finalize).</p><footer>Stanislau Malchanau</footer></article>
<article class="sticky" id="n3"><p>The promo object has a dark<br>gray color that usually<br>means disabled/unavailable<br>content, and the "i icon"<br>helps get confused.</p><p>The right arrow, by best<br>practices, indicates deep<br>dive into the promo/redirect<br>to a new screen.</p><p>The middle section does not<br>feel like a cart. At least some<br>icon add. The name of the<br>organization doubles<br>because of a full-screen<br>popup.</p><p>The cart+ icon feels like<br>adding a new product to the<br>cart.</p><p>The expand and collapse<br>icon has too many elements.</p><footer>Stanislau Malchanau</footer></article>
<article class="sticky" id="n4"><p>Price &amp; Discount (and more<br>custom titles) are mixed<br>with deliveries; if there are<br>several deliveries, the labels<br>move far right. This means<br>that a user has to scroll right<br>to find the data.</p><p>Also hard to understand that<br>address and date means<br>delivery.</p><footer>Stanislau Malchanau</footer></article>
<article class="sticky" id="n5"><p>Promotion dates. What does<br>it mean on the screen? Any<br>freebies for a client? Is that<br>clickable?</p><p>As a new user, it’s hard to<br>follow those dates. They<br>even aligned differently<br>from each other.</p><footer>Stanislau Malchanau</footer></article>
<article class="sticky" id="n6"><p>A double pop-up is a bad<br>practice. 3 clicks to add data.</p><p>What does it mean those 2<br>lines near titles on the left<br>side?</p><footer>Stanislau Malchanau</footer></article>
<article class="sticky" id="n7"><p>Weird text alignment, out of<br>apple guidelines.</p><footer>Stanislau Malchanau</footer></article>
<article class="sticky" id="n8"><p>The tag needs to be clarified<br>for users because of missing<br>vertical lines for each<br>column. Need help reading<br>and understanding what it<br>means.</p><footer>Stanislau Malchanau</footer></article>
</main>

<script src="https://cdn.jsdelivr.net/npm/bootstrap@5.3.0/dist/js/bootstrap.bundle.min.js"></script>
<script>
const ic = (n, cls = '') => `<svg class="ic ${cls}"><use href="#${n}"/></svg>`;
const $ = s => document.querySelector(s);
const btn = (n, label, cls = '') => `<button class="bare" aria-label="${label}">${ic(n, cls)}</button>`;

// status bars
const signal = ic('dots5', 'dots') + 'GS' + ic('wifi', 'wifi');
const statusEnd = `<span class="end ms-auto d-flex align-items-center">${ic('bt', 'batt opacity-50')}<span>%</span>${ic('batt', 'batt ms-2')}</span>`;
document.querySelectorAll('[data-signal]').forEach(e => e.innerHTML = `<span class="st-left d-flex align-items-center">${signal}</span>`);
document.querySelectorAll('[data-status]').forEach(e => e.innerHTML = `<span class="st-left"></span><span>9:41 AM</span>${statusEnd}`);

// accounts screen
const rail = ['search', 'home', 'pulse', 'starc', 'city', 'pstar', 'contact', 'box', 'crown', 'cal', 'geo', 'easel'];
$('#rail').innerHTML = rail.map((n, i) => `<button class="bare ${i == 4 ? 'on' : ''}" aria-label="${n}">${ic(n)}</button>`).join('') + '<i></i>';
const B = '#55c8f0', G = '#4fd07c', P = '#b76be0';
const accs = ['A', ['Adventure Time Technology...', 'Lister Meile 4, 30161 Hannover', B], ['Alexandrie Hotel', 'Anger 1/3, 99084 Erfurt', G], ['Aloha Hostel', 'Rämistrasse 100, 8091 Zürich', P], ['Alpha INC', 'Route de Malagnou 1, 1208 Ger...', '#3cb973', 1], ['Aurora Club', '', G], ['Avalon Technologies Inc.', '21 Rue Descartes, 75005 Paris', B], 'B', ['Bedroom Shop', '51bis Rue du rempart Saint-Etu...'], ['Beauty Professional Labs', 'Piazza di S. Maria Maggiore', B], ['Beauty &amp; Spa', 'Via Luigi Settembrini, 79, 80191...'], ['Best East Company INC', '', G]];
$('#accs').innerHTML = accs.map(a => typeof a == 'string' ? `<div class="alpha">${a}</div>` : `<div class="acc ${a[3] ? 'on' : ''}" style="--c:${a[2] || 'transparent'}"><div>${a[0]}<div class="sub">${a[1]}</div></div></div>`).join('');
let at = 0;
$('#donut').innerHTML = [['#efcd62', 47], ['#80cf6b', 33], ['#f3965b', 69], ['#3db8f7', 211]].map(([c, d]) => {
  const s = `<circle cx="70" cy="70" r="53" stroke="${c}" pathLength="360" stroke-dasharray="${d} ${360 - d}" stroke-dashoffset="${-at}"/>`; at += d; return s;
}).join('');
$('#legend').innerHTML = [['W', '#3db8f7'], ['P', '#f3965b'], ['A', '#80cf6b'], ['E', '#efcd62']].map(l => `<div class="legend-row" style="--c:${l[1]}">${l[0]}</div>`).join('');

// side trees
const cat = (n, open) => `<div class="tree-row"><svg class="tri"><use href="#tri-${open ? 'd' : 'r'}"/></svg>${n}<button class="bare go" aria-label="Open ${n}">${ic('right')}</button></div>`;
const leaf = (n, b) => `<div class="tree-row leaf">${ic('info', 'i-circle txt-teal me-2')}<div>${n}<div class="txt-grey" style="font-size:10px">Subtitle</div></div><span class="ms-auto txt-grey" style="--ic:11px">${b ? ic('boxes') : ''}</span><button class="bare txt-teal ms-2" aria-label="Add ${n}">${ic('right')}</button></div>`;
$('#cats').innerHTML = cat('CATALOG 2') + cat('CATALOG 3', 1) + `<div class="tree-row subcat"><svg class="tri"><use href="#tri-d"/></svg>Subcatalog 3<button class="bare go txt-teal" aria-label="Open subcatalog">${ic('right')}</button></div>` + leaf('Product 3') + leaf('Product 4', 1) + ['4', '5', '7', '8', '11'].map(n => cat('CATALOG ' + n)).join('');
$('#cats').style.setProperty('--ic', '17px');
$('#promos').innerHTML = ['PROMO 1', 'PROMO 2'].map(n => `<div class="tree-row" style="height:40px;font-size:13px;--ic:18px">${ic('info', 'me-2')}<svg class="tri ms-1"><use href="#tri-r"/></svg>${n}<button class="bare go" aria-label="Open ${n}">${ic('right')}</button></div>`).join('');

// order tables
const qty = v => {
  const dead = v === 'x', n = dead ? '0' : v;
  return `<div class="qty"><button class="bare ${n === '0' ? 'off' : ''}" aria-label="Less">${ic('cminus')}</button><input value="${n}" ${dead ? 'disabled' : ''} aria-label="Quantity"><button class="bare ${dead ? 'off' : ''}" aria-label="More">${ic('cplus')}</button></div>`;
};
const header = (t, big) => `<div class="bar"><svg class="deco"><use href="#deco"/></svg><div class="status d-flex align-items-center"><span class="st-left d-flex align-items-center">${t == 'panelin' ? '' : signal}</span><span>9:41 AM</span>${statusEnd}</div>
<div class="tools"><div class="start d-flex">${btn(t, 'Toggle panel')}</div><h2>NAME OF ORGANIZATION</h2>${btn('info', 'Info', 'i-circle')}<div class="end ms-auto d-flex align-items-center">${big ? '' : btn('cart', 'Add to cart') + '<button class="bare">Finalize</button>'}${btn('more', 'More', 'more')}</div></div></div>`;
function table(c) {
  const n = c.cols.length, shade = i => i % 2 ? '' : 'shade';
  const tail = r => c.tail.map(t => t == 'fam' ? `<td class="fam">${r.fam || ''}</td>` : t == 'price' ? `<td class="price">${r.price || ''}</td>` : t == 'disc' ? `<td class="disc">${r.disc || ''}</td>` : `<td class="tagcell">${r.tag ? ic(r.tag) : ''}</td>`).join('');
  const names = { fam: '<th class="fam" style="line-height:23px">PRODUCT<br>FAMILY</th>', price: '<th>PRICE</th>', disc: '<th>DISCOUNT</th>', tag: '<th></th>' };
  let h = `<table class="order"><colgroup>${c.w.map(w => `<col style="width:${w ? w + 'px' : 'auto'}">`).join('')}</colgroup><thead><tr><th class="first">PRODUCT NAME${ic('down')}</th>${c.cols.map(d => `<th class="dlv">${d[0]}<br><b class="fw-semibold">${d[1]}</b></th>`).join('')}${c.tail.map(t => names[t]).join('')}</tr></thead><tbody>`;
  c.rows.forEach(r => {
    if (r.band) { h += `<tr class="bandrow"><td colspan="${1 + n + c.tail.length}"><div class="bandline">${ic('easel')}<span class="lbl">${r.band}</span>${r.dates ? '<div class="span-dates"><span><b>Sales</b> 05.12.22-20.12.22</span><span><b>Delivery</b> 28.11.22-15.12.22</span></div>' : ''}</div></td></tr>`; return; }
    const lead = r.open ? `<span class="lead-col"><svg class="tri"><use href="#tri-d"/></svg>${c.big ? ic('boxes') : '<span class="d-block" style="height:var(--lh2)"></span>'}</span>` : '';
    h += `<tr class="r ${r.cls || ''}"><td><div class="nm"><span class="${r.ind ? 'ind' + r.ind : ''}"></span>${lead}<div>${r.n}<div class="sub">${r.s || 'Subtitle'}</div></div><span class="ms-auto d-flex align-items-center">${r.open && !c.big ? ic('boxes', 'bundle') : ''}${r.info === 0 ? '' : ic('info', 'i-circle')}</span></div></td>${c.cols.map((d, i) => `<td class="${shade(i)}">${qty(r.q[i])}</td>`).join('')}${tail(r)}</tr>`;
  });
  if (c.fill) h += `<tr style="height:${c.fill}px"><td></td>${c.cols.map((d, i) => `<td class="${c.big ? '' : shade(i)}"></td>`).join('')}<td colspan="${c.tail.length}"></td></tr>`;
  return h + '</tbody></table>';
}
const addr = [['44 Av. Des...Élysées', '12.09.20'], ['11 Avenue...Wagram', '15.09.20'], ['59 Avenue Foch', '17.09.20'], ['37 Avenue Hoche', '20.09.20']];
const base = dates => [
  { band: 'CATALOGS', dates }, { n: 'Product 1', q: ['34', '60', '100', '50'], price: '289 €' }, { n: 'Product 2', q: ['6', '6', '5', '5'], price: '1 056 €', disc: '24 €' }, { n: 'Product 5', q: ['0', '129', '54', '118'], price: '28 €' },
  { band: 'NAME PROMO', dates: 1 }, { n: 'Product 7', q: ['8', '9', '4', '12'], price: '74 €', disc: '4 €' }, { n: 'Product 8 Bundle', q: ['0', '0', '0', '0'], open: 1, cls: 'sku0' },
  { n: 'SKU 1', ind: 2, info: 0, q: ['x', 'x', 'x', 'x'], cls: 'sku' }, { n: 'SKU 2', ind: 2, info: 0, q: ['x', 'x', 'x', 'x'], cls: 'sku last' }, { n: 'Product 10', q: ['180', '0', '0', '0'], price: '2 567 €', disc: '65 €' }];
const totals = (h, fs, gap, r) => `<div class="totals" style="height:${h}px;font-size:${fs}px;gap:${gap}px;padding:${Math.round(h / 4)}px ${r}px 0 0"><div>Total List Price<b>2 456 €</b></div><div>Total Discount<b>93 €</b></div><div>Total Price<b>2 136 €</b></div></div>`;
const edit = base(1); edit[9].cls = 'shifted';
const P0 = 'Product Name';
const big = [
  { band: 'CATALOGS', dates: 1 }, { n: P0, s: '314.30', q: ['34'], fam: 'Shampoo', price: '289 €', tag: 'tag0' }, { n: P0, s: '198.50', q: ['6'], fam: 'Cream', price: '1 056 €', disc: '24 €', tag: 'tag1' }, { n: P0, s: '31785784.30', q: ['x'], fam: 'Shampoo' },
  { band: 'NAME PROMO', dates: 1 }, { n: P0, s: '314.30', q: ['8'], fam: 'Cream', price: '74 €', disc: '4 €', tag: 'tag2' },
  { n: 'Product Name Bundle', s: '76857665', q: ['0'], open: 1, fam: 'Bundle', cls: 'sku' }, { n: 'SKU 1', s: '3547', ind: 1, info: 0, q: ['0'], cls: 'sku' }, { n: 'SKU 2', s: '467', ind: 1, open: 1, info: 0, q: ['0'], cls: 'sku' }, { n: 'SKU 2.1', s: '467', ind: 2, info: 0, q: ['x'], cls: 'sku' }, { n: 'SKU 2.2', s: '467', ind: 2, info: 0, q: ['x'], cls: 'sku' }, { n: 'SKU 3', s: '3547', ind: 1, info: 0, q: ['0'], cls: 'sku last' },
  { n: P0, s: '314.30', q: ['180'], fam: 'Shampoo', price: '2 567 €', disc: '65 €', tag: 'tag2' }];
const set = (k, html) => $(`[data-order=${k}]`).innerHTML = html;
set('four', header('panelout') + table({ cols: addr, w: [251, 129, 129, 129, 129, 51, 0], tail: ['price', 'disc'], rows: base(0), fill: 122 }) + '<div class="totals"></div>');
set('small', header('panelout') + table({ cols: addr, w: [161, 83, 83, 84, 84, 33, 0], tail: ['price', 'disc'], rows: base(0), fill: 80 }) + totals(33, 7, 17, 19));
set('dates', header('panelout') + table({ cols: addr, w: [161, 83, 84, 84, 84, 33, 0], tail: ['price', 'disc'], rows: base(1), fill: 80 }) + '<div class="totals"></div>');
set('edit', header('panelin') + table({ cols: [['Dubininskaya, 53', '12.09.20']], w: [241, 120, 80, 0], tail: ['price', 'disc'], rows: edit, fill: 200 }));
set('large', header('panelout', 1) + table({ big: 1, cols: [['Dubininskaya, 53', '12.09.20']], w: [434, 224, 218, 97, 120, 0], tail: ['fam', 'price', 'disc', 'tag'], rows: big, fill: 41 }) + totals(86, 19, 46, 38));

// hand-drawn marker strokes: points joined with a Catmull-Rom curve
const smooth = s => {
  const p = s.split(' ').map(q => q.split(',').map(Number));
  let d = `M${p[0]}`;
  for (let i = 0; i < p.length - 1; i++) {
    const a = p[i - 1] || p[i], b = p[i], c = p[i + 1], e = p[i + 2] || c;
    d += `C${b[0] + (c[0] - a[0]) / 6} ${b[1] + (c[1] - a[1]) / 6} ${c[0] - (e[0] - b[0]) / 6} ${c[1] - (e[1] - b[1]) / 6} ${c}`;
  }
  return d;
};
const bright = [
  '83,128 97,123 111,126 124,140 140,168 153,196 164,232 172,293 175,357 172,439 171,490 164,561 153,628 144,668 133,709 116,740 103,754 90,757 81,749 61,708 48,663 41,633 41,561 48,520 55,495 59,434 65,357 68,306 68,240 72,179 79,143 86,129',
  '1124,56 1095,66 1080,70 1048,80 1021,96 995,101', '1001,101 1008,90 1006,81 997,83 994,100 1004,103 1028,105',
  '818,311 790,319 766,327 758,335 761,347 781,355 810,361 858,362 901,363 943,362 988,358 1010,352 1013,345 1002,335 980,325 951,318 899,314 866,312 840,315 818,319 794,328',
  '695,1924 675,1920 654,1922 641,1928 639,1935 650,1942 675,1944 741,1948 799,1947 840,1945 914,1944 937,1941 940,1937 922,1929 898,1925 865,1921 790,1920 732,1920 675,1922',
  '773,1926 776,1923 781,1924 782,1929 772,1936 771,1940', '772,1943 773,1943',
  '1204,1916 1188,1917 1164,1922 1152,1934 1157,1946 1188,1950 1255,1950 1303,1950 1352,1949 1364,1945 1365,1936 1352,1928 1303,1923 1246,1923 1224,1919 1188,1915'];
const amber = [
  '385,922 406,921 423,928 429,950 423,967 402,975 381,970 371,955 378,936 394,930 406,929',
  '388,981 416,975 441,980 445,999 438,1020 413,1024 392,1021 381,1004 385,984 402,977 420,976',
  '909,865 891,868 884,889 891,909 921,915 944,906 947,887 935,872 914,871 893,877',
  '746,1142 757,1138 773,1151 778,1165 769,1182 755,1197 750,1209 756,1228', '759,1248 769,1256 762,1254',
  '1109,1200 1084,1199 1063,1210 1059,1222 1073,1236 1097,1246 1134,1248 1170,1244 1192,1235 1197,1222 1186,1207 1158,1200 1124,1198 1097,1200',
  '1642,1199 1611,1202 1583,1215 1571,1230 1577,1247 1605,1257 1641,1260 1678,1255 1702,1243 1711,1222 1707,1204 1684,1199 1660,1203 1640,1208',
  '76,2370 86,2361 96,2363 105,2382 110,2407 105,2432 96,2450 79,2457 65,2450 54,2427 54,2405 61,2387 70,2376 79,2374',
  '424,2429 401,2445 376,2459', '383,2441 376,2459 387,2466 404,2467',
  '767,2490 760,2505 757,2557 757,2653 761,2677 774,2703 803,2729 827,2745 844,2747 862,2732 870,2715 875,2686 874,2672 869,2653 870,2596 862,2574 844,2565 830,2560 823,2545 823,2530 810,2522 788,2517 779,2502 773,2497',
  '805,2585 810,2578 825,2586 831,2603 825,2619 808,2631 808,2646', '804,2687 808,2682 812,2685 804,2687',
  '1170,2490 1162,2502 1157,2531 1147,2548 1125,2553 1098,2567 1089,2584 1088,2610 1095,2634 1094,2653 1087,2672 1085,2691',
  '1182,2495 1196,2486 1226,2488 1256,2506 1262,2524 1261,2553 1251,2591 1252,2624 1259,2662 1260,2691',
  '1177,2570 1186,2574 1194,2591 1189,2605 1175,2622 1178,2637', '1169,2667 1175,2669',
  '1339,3154 1278,3151 1219,3131 1167,3106 1154,3103', '1180,3095 1156,3102 1164,3123 1162,3096', '1339,3154 1278,3186 1241,3198 1196,3207', '1214,3190 1199,3200 1189,3219 1196,3225 1226,3228',
  '1361,3126 1364,3115 1381,3115 1401,3134 1396,3148 1379,3158 1378,3175', '1375,3198 1383,3198',
  '1022,3067 1022,3954', '1219,3067 1219,3953'];
$('#ink').innerHTML = `<g stroke="#ffe900" stroke-width="5">${bright.map(s => `<path d="${smooth(s)}"/>`).join('')}</g><g stroke="#ffcd29" stroke-width="5">${amber.map(s => `<path d="${smooth(s)}"/>`).join('')}</g>`;
</script>
</body>
</html>
